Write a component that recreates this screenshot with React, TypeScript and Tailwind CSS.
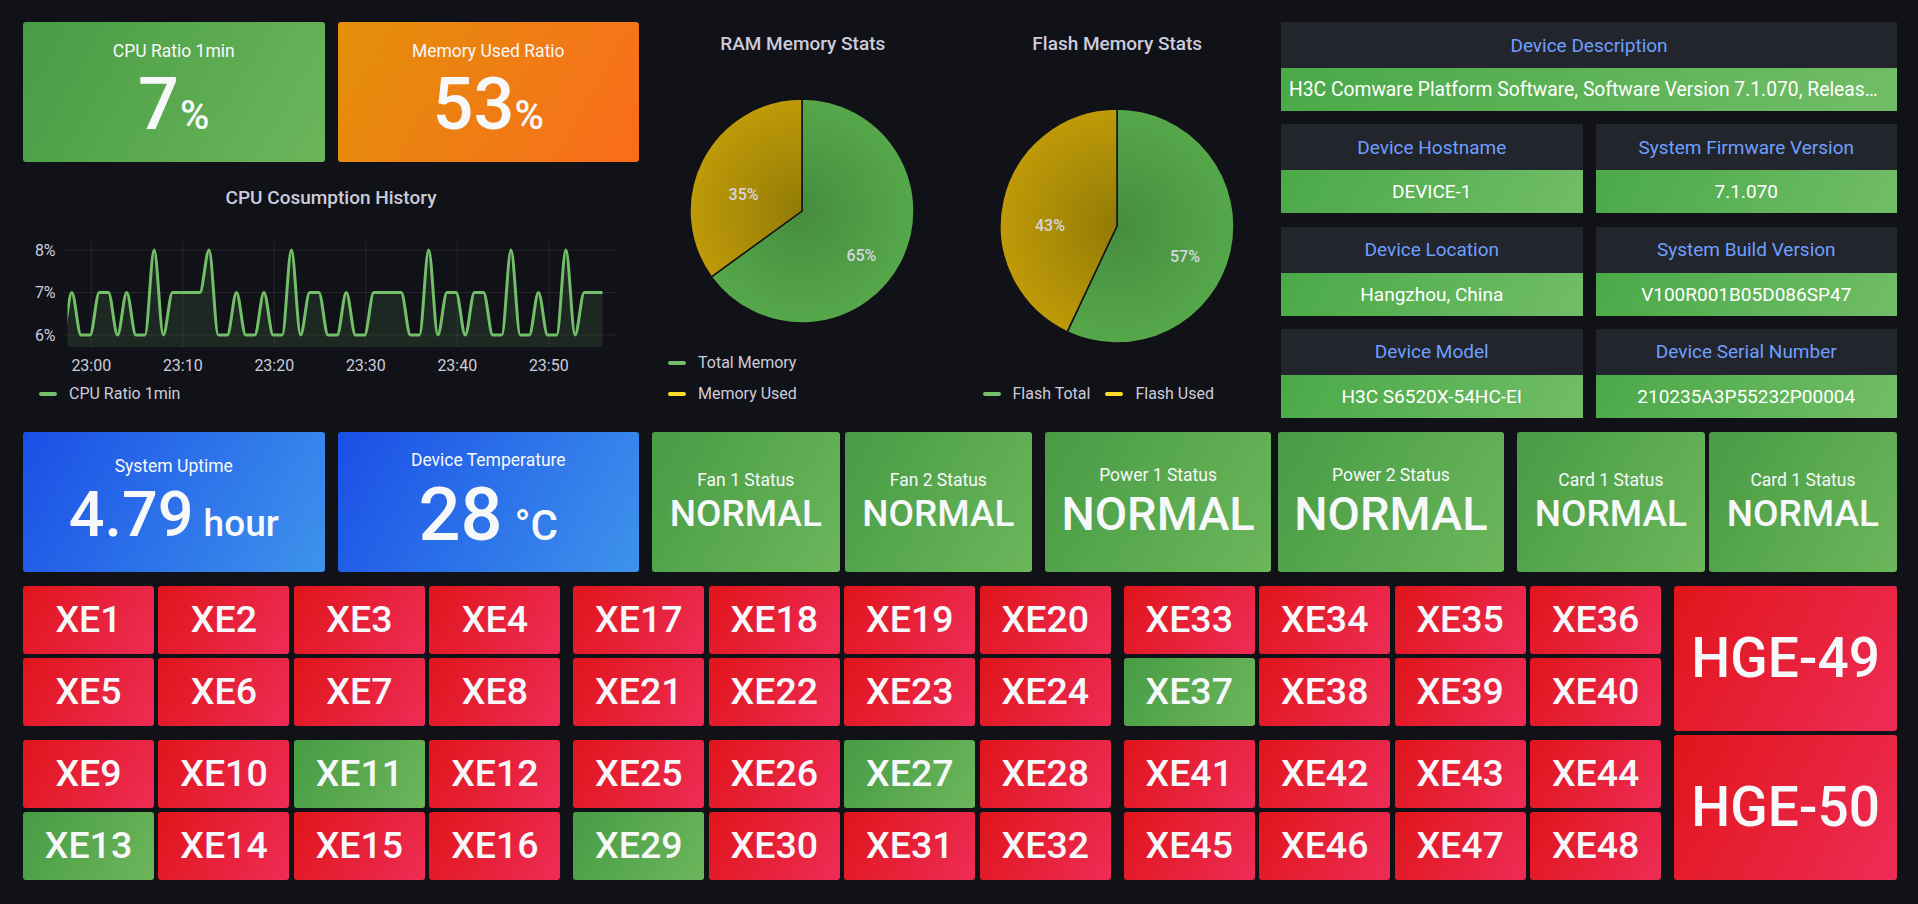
import React from 'react';

const GREEN = 'bg-[linear-gradient(120deg,#479c44,#6cb65b)]';
const RED = 'bg-[linear-gradient(120deg,#e0151a,#ee2c56)]';
const ORANGE = 'bg-[linear-gradient(120deg,#e3900a,#fa6c1c)]';
const BLUE = 'bg-[linear-gradient(120deg,#1a4fe6,#3e93ec)]';
const INFO_GREEN = 'bg-[linear-gradient(120deg,#4aa948,#71bd66)]';

// one sample per minute, first point sits just left of the plot edge
const cpuSeries = [
  6, 7, 6, 6, 7, 7, 6, 7, 6, 6, 8, 6, 7, 7, 7, 7, 8, 6, 6, 7, 6, 6, 7, 6, 6, 8, 6, 7, 7, 6, 6, 7, 6, 6, 7, 7, 7, 7, 6,
  6, 8, 6, 7, 7, 6, 7, 7, 6, 6, 8, 6, 6, 7, 6, 6, 8, 6, 7, 7, 7,
];

const greenPorts = ['XE11', 'XE13', 'XE27', 'XE29', 'XE37'];

function LegendItem({ color, label, className = '' }: { color: string; label: string; className?: string }) {
  return (
    <div className={`flex items-center ${className}`}>
      <span className={`w-[18px] h-[4px] rounded-full ${color}`} />
      <span className="ml-[12px] text-[16px] text-[#ccccdc] leading-none">{label}</span>
    </div>
  );
}

function CpuChart() {
  const x0 = 39.65;
  const dx = 9.15;
  const yOf = (v: number) => (v === 8 ? 12 : v === 7 ? 54.5 : 97);
  const pts = cpuSeries.map((v, i) => [x0 + i * dx, yOf(v)]);
  let d = `M${pts[0][0]},${pts[0][1]}`;
  for (let i = 1; i < pts.length; i++) {
    const [xa, ya] = pts[i - 1];
    const [xb, yb] = pts[i];
    const c = (xb - xa) / 3;
    d += ` C${xa + c},${ya} ${xb - c},${yb} ${xb},${yb}`;
  }
  const area = `${d} L${pts[pts.length - 1][0]},109 L${pts[0][0]},109 Z`;
  const xTicks = ['23:00', '23:10', '23:20', '23:30', '23:40', '23:50'];

  return (
    <svg width={615} height={140} className="block">
      <defs>
        <clipPath id="cpu-clip">
          <rect x={44.5} y={0} width={540} height={140} />
        </clipPath>
      </defs>
      {[12, 54.5, 97].map((y) => (
        <line key={y} x1={41} x2={594} y1={y} y2={y} stroke="rgba(204,204,220,0.1)" strokeWidth={1} />
      ))}
      {xTicks.map((t, i) => (
        <line key={t} x1={68.3 + i * 91.5} x2={68.3 + i * 91.5} y1={4} y2={109} stroke="rgba(204,204,220,0.1)" strokeWidth={1} />
      ))}
      <g clipPath="url(#cpu-clip)">
        <path d={area} fill="rgba(115,191,105,0.13)" />
        <path d={d} fill="none" stroke="#73BF69" strokeWidth={3} strokeLinejoin="round" />
      </g>
      {[
        ['8%', 12],
        ['7%', 54.5],
        ['6%', 97],
      ].map(([label, y]) => (
        <text key={label} x={32.6} y={y} textAnchor="end" dominantBaseline="central" fontSize={16} fill="#ccccdc">
          {label}
        </text>
      ))}
      {xTicks.map((t, i) => (
        <text key={t} x={68.3 + i * 91.5} y={127} textAnchor="middle" dominantBaseline="central" fontSize={16} fill="#ccccdc">
          {t}
        </text>
      ))}
    </svg>
  );
}

function Pie({ id, height, cy, r, greenFrac, labels }: {
  id: string;
  height: number;
  cy: number;
  r: number;
  greenFrac: number;
  labels: [string, number, number][];
}) {
  const cx = 150;
  const ang = 2 * Math.PI * greenFrac;
  const gx = cx + r * Math.sin(ang);
  const gy = cy - r * Math.cos(ang);
  const greenPath = `M${cx},${cy} L${cx},${cy - r} A${r},${r} 0 ${greenFrac > 0.5 ? 1 : 0} 1 ${gx},${gy} Z`;
  const yellowPath = `M${cx},${cy} L${gx},${gy} A${r},${r} 0 ${greenFrac < 0.5 ? 1 : 0} 1 ${cx},${cy - r} Z`;
  return (
    <svg width={301} height={height} className="block">
      <defs>
        <radialGradient id={`${id}-g`} cx={cx} cy={cy} r={r} gradientUnits="userSpaceOnUse">
          <stop offset="0%" stopColor="#458d3e" />
          <stop offset="100%" stopColor="#56a74a" />
        </radialGradient>
        <radialGradient id={`${id}-y`} cx={cx} cy={cy} r={r} gradientUnits="userSpaceOnUse">
          <stop offset="0%" stopColor="#917b06" />
          <stop offset="100%" stopColor="#bf9a08" />
        </radialGradient>
      </defs>
      <path d={greenPath} fill={`url(#${id}-g)`} stroke="#111217" strokeWidth={1.5} strokeLinejoin="round" />
      <path d={yellowPath} fill={`url(#${id}-y)`} stroke="#111217" strokeWidth={1.5} strokeLinejoin="round" />
      {labels.map(([t, x, y]) => (
        <text key={t} x={x} y={y} textAnchor="middle" dominantBaseline="central" fontSize={16} fontWeight={500} fill="#d6d6de">
          {t}
        </text>
      ))}
    </svg>
  );
}

function StatBox({ title, value, unit, bg, valueCls, unitCls = '', gapCls }: {
  title: string;
  value: string;
  unit?: string;
  bg: string;
  valueCls: string;
  unitCls?: string;
  gapCls: string;
}) {
  return (
    <div className={`${bg} h-full rounded-[3px] flex flex-col items-center justify-center text-[#f7f8fa]`}>
      <div className="text-[17.5px] leading-none">{title}</div>
      <div className={`${gapCls} flex items-baseline leading-none font-medium`}>
        <span className={valueCls}>{value}</span>
        {unit && <span className={unitCls}>{unit}</span>}
      </div>
    </div>
  );
}

function InfoCell({ label, value }: { label: string; value: string }) {
  return (
    <div className="flex flex-col h-[89px]">
      <div className="h-[46px] bg-[#22252b] flex items-center justify-center text-[#6e9fff] text-[19px] leading-none">
        {label}
      </div>
      <div className={`h-[43px] ${INFO_GREEN} flex items-center justify-center text-white text-[19px] leading-none`}>
        {value}
      </div>
    </div>
  );
}

function PortPanel({ from }: { from: number }) {
  const names = Array.from({ length: 8 }, (_, i) => `XE${from + i}`);
  return (
    <div className="grid grid-cols-4 grid-rows-2 gap-x-[4.5px] gap-y-[4px] h-[140px]">
      {names.map((n) => (
        <div
          key={n}
          className={`${greenPorts.includes(n) ? GREEN : RED} rounded-[3px] flex items-center justify-center text-[37.5px] font-medium leading-none text-[#f7f8fa]`}
        >
          {n}
        </div>
      ))}
    </div>
  );
}

export default function App() {
  return (
    <div className="w-[1918px] h-[904px] overflow-hidden bg-[#111217] pl-[23px] pr-[21px] pt-[22px] font-['Roboto',sans-serif]">
      {/* top row */}
      <div className="grid grid-cols-[repeat(24,minmax(0,1fr))] gap-x-[13px] h-[396px]">
        <div className="col-span-8 flex flex-col">
          <div className="grid grid-cols-2 gap-x-[13px] h-[140px]">
            <StatBox title="CPU Ratio 1min" value="7" unit="%" bg={GREEN} valueCls="text-[72px]" unitCls="text-[40px] ml-[1px]" gapCls="mt-[8px]" />
            <StatBox title="Memory Used Ratio" value="53" unit="%" bg={ORANGE} valueCls="text-[72px]" unitCls="text-[40px]" gapCls="mt-[8px]" />
          </div>
          <div className="mt-[13px] flex-1 flex flex-col">
            <div className="pt-[12.8px] text-center text-[19px] font-medium leading-none text-[#ccccdc]">CPU Cosumption History</div>
            <div className="mt-[31.2px]">
              <CpuChart />
            </div>
            <div className="h-[31px] mt-[0.5px] flex items-center">
              <LegendItem color="bg-[#73BF69]" label="CPU Ratio 1min" className="ml-[16px]" />
            </div>
          </div>
        </div>

        <div className="col-span-4 flex flex-col">
          <div className="pt-[11.8px] text-center text-[19px] font-medium leading-none text-[#ccccdc]">RAM Memory Stats</div>
          <div className="mt-[29.2px]">
            <Pie id="ram" height={258} cy={129} r={112} greenFrac={0.65} labels={[['35%', 91.6, 112], ['65%', 209.4, 173]]} />
          </div>
          <div className="mt-[7.5px]">
            <div className="h-[31px] flex items-center">
              <LegendItem color="bg-[#73BF69]" label="Total Memory" className="ml-[16px]" />
            </div>
            <div className="h-[31px] flex items-center">
              <LegendItem color="bg-[#FADE2A]" label="Memory Used" className="ml-[16px]" />
            </div>
          </div>
        </div>

        <div className="col-span-4 flex flex-col">
          <div className="pt-[11.8px] text-center text-[19px] font-medium leading-none text-[#ccccdc]">Flash Memory Stats</div>
          <div className="mt-[29.2px]">
            <Pie id="flash" height={288} cy={144} r={117} greenFrac={0.57} labels={[['43%', 83, 143], ['57%', 218, 174]]} />
          </div>
          <div className="mt-[8.5px] h-[31px] flex items-center">
            <LegendItem color="bg-[#73BF69]" label="Flash Total" className="ml-[16px]" />
            <LegendItem color="bg-[#FADE2A]" label="Flash Used" className="ml-[15px]" />
          </div>
        </div>

        <div className="col-span-8 flex flex-col justify-between">
          <div className="flex flex-col h-[89px]">
            <div className="h-[46px] bg-[#22252b] flex items-center justify-center text-[#6e9fff] text-[19px] leading-none">
              Device Description
            </div>
            <div className={`h-[43px] ${INFO_GREEN} pl-[8px] pr-[17px] text-white text-[19.3px] leading-[43px] truncate`}>
              H3C Comware Platform Software, Software Version 7.1.070, Release 6530P02 Copyright (c) 2004-2023 New H3C Technologies Co., Ltd.
            </div>
          </div>
          <div className="grid grid-cols-2 gap-x-[13px]">
            <InfoCell label="Device Hostname" value="DEVICE-1" />
            <InfoCell label="System Firmware Version" value="7.1.070" />
          </div>
          <div className="grid grid-cols-2 gap-x-[13px]">
            <InfoCell label="Device Location" value="Hangzhou, China" />
            <InfoCell label="System Build Version" value="V100R001B05D086SP47" />
          </div>
          <div className="grid grid-cols-2 gap-x-[13px]">
            <InfoCell label="Device Model" value="H3C S6520X-54HC-EI" />
            <InfoCell label="Device Serial Number" value="210235A3P55232P00004" />
          </div>
        </div>
      </div>

      {/* status row */}
      <div className="mt-[14px] grid grid-cols-[repeat(24,minmax(0,1fr))] gap-x-[13px] h-[140px]">
        <div className="col-span-4">
          <StatBox title="System Uptime" value="4.79" unit="hour" bg={BLUE} valueCls="text-[63px]" unitCls="text-[37px] ml-[10px]" gapCls="mt-[7px]" />
        </div>
        <div className="col-span-4">
          <StatBox title="Device Temperature" value="28" unit="°C" bg={BLUE} valueCls="text-[74px]" unitCls="text-[42px] ml-[12px]" gapCls="mt-[8px]" />
        </div>
        <div className="col-span-5 grid grid-cols-2 gap-x-[5px]">
          <StatBox title="Fan 1 Status" value="NORMAL" bg={GREEN} valueCls="text-[37px]" gapCls="mt-[5px]" />
          <StatBox title="Fan 2 Status" value="NORMAL" bg={GREEN} valueCls="text-[37px]" gapCls="mt-[5px]" />
        </div>
        <div className="col-span-6 grid grid-cols-2 gap-x-[7px]">
          <StatBox title="Power 1 Status" value="NORMAL" bg={GREEN} valueCls="text-[47px]" gapCls="mt-[5px]" />
          <StatBox title="Power 2 Status" value="NORMAL" bg={GREEN} valueCls="text-[47px]" gapCls="mt-[5px]" />
        </div>
        <div className="col-span-5 grid grid-cols-2 gap-x-[4px]">
          <StatBox title="Card 1 Status" value="NORMAL" bg={GREEN} valueCls="text-[37px]" gapCls="mt-[5px]" />
          <StatBox title="Card 1 Status" value="NORMAL" bg={GREEN} valueCls="text-[37px]" gapCls="mt-[5px]" />
        </div>
      </div>

      {/* interface ports */}
      <div className="mt-[14px] grid grid-cols-[repeat(24,minmax(0,1fr))] gap-x-[13px] h-[294px]">
        <div className="col-span-7 flex flex-col gap-y-[14px]">
          <PortPanel from={1} />
          <PortPanel from={9} />
        </div>
        <div className="col-span-7 flex flex-col gap-y-[14px]">
          <PortPanel from={17} />
          <PortPanel from={25} />
        </div>
        <div className="col-span-7 flex flex-col gap-y-[14px]">
          <PortPanel from={33} />
          <PortPanel from={41} />
        </div>
        <div className="col-span-3 flex flex-col gap-y-[4px]">
          <div className={`${RED} flex-1 rounded-[3px] flex items-center justify-center text-[55px] font-medium leading-none text-[#f7f8fa]`}>
            HGE-49
          </div>
          <div className={`${RED} flex-1 rounded-[3px] flex items-center justify-center text-[55px] font-medium leading-none text-[#f7f8fa]`}>
            HGE-50
          </div>
        </div>
      </div>
    </div>
  );
}
